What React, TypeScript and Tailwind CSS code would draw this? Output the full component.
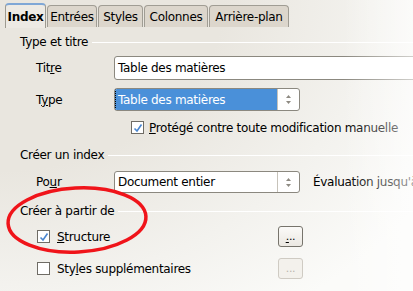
import React from 'react';

const font = { fontFamily: '"DejaVu Sans", "Liberation Sans", sans-serif' };

const Tab = ({ label, active, w }: { label: string; active?: boolean; w: string }) => (
    <div
        className={
            active
                ? `${w} h-[25px] -mb-px flex items-center justify-center rounded-t-[4px] border border-b-0 border-[#9d9a90] border-t-2 border-t-[#7fa7d6] bg-[#edeae4] font-bold text-[12px] text-black`
                : `${w} h-[22px] flex items-center justify-center rounded-t-[4px] border border-b-0 border-[#a09d94] bg-[#dcd6cc] text-[12px] text-black`
        }
    >
        {label}
    </div>
);

const Section = ({ title, mt }: { title: string; mt: string }) => (
    <div className={`${mt} flex items-center gap-[4px] pl-[20px] h-[18px]`}>
        <span className="text-[12px] text-black whitespace-nowrap">{title}</span>
        <div className="flex-1 h-px bg-[#b3afa5] border-b border-white" />
    </div>
);

const Spin = () => (
    <div className="w-[22px] h-full flex items-center justify-center border-l border-[#c7c3ba]">
        <svg width="7" height="11" viewBox="0 0 7 11">
            <path d="M3.5 1 L6 4 L1 4 Z" fill="#8e8a82" />
            <path d="M3.5 10 L6 7 L1 7 Z" fill="#8e8a82" />
        </svg>
    </div>
);

const Check = ({ checked }: { checked?: boolean }) => (
    <div className="w-[13px] h-[13px] border border-[#6f6c65] bg-white flex items-center justify-center shrink-0">
        {checked && (
            <svg width="10" height="10" viewBox="0 0 10 10">
                <path d="M1.5 5.5 L4 8 L8.5 1.5" stroke="#4a86cf" strokeWidth="1.6" fill="none" />
            </svg>
        )}
    </div>
);

const DotsButton = ({ disabled }: { disabled?: boolean }) => (
    <div
        className={
            disabled
                ? 'w-[25px] h-[21px] shrink-0 rounded-[3px] border border-[#cfcbc3] bg-[#f3f1ec] flex items-center justify-center text-[11px] text-[#b9b5ad] leading-none'
                : 'w-[25px] h-[21px] shrink-0 rounded-[3px] border border-[#77746c] bg-gradient-to-b from-[#fbfaf8] to-[#ebe8e2] flex items-center justify-center text-[11px] text-black leading-none'
        }
    >
        <span className={disabled ? '' : 'underline underline-offset-2'}>.</span>
        <span>..</span>
    </div>
);

export default function App() {
    return (
        <div
            style={font}
            className="w-[413px] h-[291px] overflow-hidden relative tracking-[-0.3px] bg-[radial-gradient(ellipse_120%_130%_at_0%_0%,#e9e6df_45%,#f3f2ee_75%,#fbfbf9_100%)]"
        >
            {/* Tabs */}
            <div className="flex items-end pl-[5px] pt-[2px] h-[27px] gap-px">
                <Tab label="Index" active w="w-[41px]" />
                <Tab label="Entrées" w="w-[50px]" />
                <Tab label="Styles" w="w-[45px]" />
                <Tab label="Colonnes" w="w-[64px]" />
                <Tab label="Arrière-plan" w="w-[80px]" />
            </div>

            {/* Type et titre */}
            <Section title="Type et titre" mt="mt-[6px]" />
            <div className="mt-[5px] flex items-center h-[24px]">
                <span className="w-[114px] shrink-0 pl-[36px] text-[12px]">
                    Tit<span className="underline">r</span>e
                </span>
                <div className="flex-1 h-full -mr-[4px] rounded-[3px] border border-[#8b887f] bg-white flex items-center pl-[3px] text-[12px]">
                    Table des matières
                </div>
            </div>
            <div className="mt-[8px] flex items-center h-[23px]">
                <span className="w-[114px] shrink-0 pl-[36px] text-[12px]">
                    T<span className="underline">y</span>pe
                </span>
                <div className="w-[186px] shrink-0 h-full rounded-[3px] border border-[#8b887f] bg-white flex items-center overflow-hidden">
                    <div className="flex-1 h-full bg-[#4a90d9] text-white text-[12px] flex items-center pl-[2px] border-l border-dotted border-black">
                        Table des matières
                    </div>
                    <Spin />
                </div>
            </div>
            <div className="mt-[10px] flex items-center gap-[5px] pl-[131px] h-[13px]">
                <Check checked />
                <span className="text-[12px] whitespace-nowrap">
                    <span className="underline">P</span>rotégé contre toute modification manuelle
                </span>
            </div>

            {/* Créer un index */}
            <Section title="Créer un index" mt="mt-[12px]" />
            <div className="mt-[7px] flex items-center h-[22px]">
                <span className="w-[114px] shrink-0 pl-[36px] text-[12px]">
                    Po<span className="underline">u</span>r
                </span>
                <div className="w-[186px] shrink-0 h-full rounded-[3px] border border-[#8b887f] bg-white flex items-center">
                    <div className="flex-1 text-[12px] pl-[3px]">Document entier</div>
                    <Spin />
                </div>
                <span className="ml-[13px] text-[12px] whitespace-nowrap">Évaluation jusqu'à</span>
            </div>

            {/* Créer à partir de */}
            <Section title="Créer à partir de" mt="mt-[9px]" />
            <div className="mt-[6px] flex items-center h-[21px]">
                <div className="w-[278px] shrink-0 pl-[37px] flex items-center gap-[7px]">
                    <Check checked />
                    <span className="text-[12px]">
                        <span className="underline">S</span>tructure
                    </span>
                </div>
                <DotsButton />
            </div>
            <div className="mt-[11px] flex items-center h-[21px]">
                <div className="w-[278px] shrink-0 pl-[37px] flex items-center gap-[7px]">
                    <Check />
                    <span className="text-[12px]">
                        Sty<span className="underline">l</span>es supplémentaires
                    </span>
                </div>
                <DotsButton disabled />
            </div>

            {/* right-edge fade of the screenshot */}
            <div className="absolute inset-y-0 right-0 w-[70px] pointer-events-none bg-gradient-to-r from-transparent to-white/60" />

            {/* Red annotation ellipse */}
            <svg className="absolute left-0 top-0 pointer-events-none" width="413" height="291">
                <ellipse cx="77" cy="220" rx="69" ry="32" fill="none" stroke="#f0141a" strokeWidth="3.5" transform="rotate(-3 77 220)" />
            </svg>
        </div>
    );
}
